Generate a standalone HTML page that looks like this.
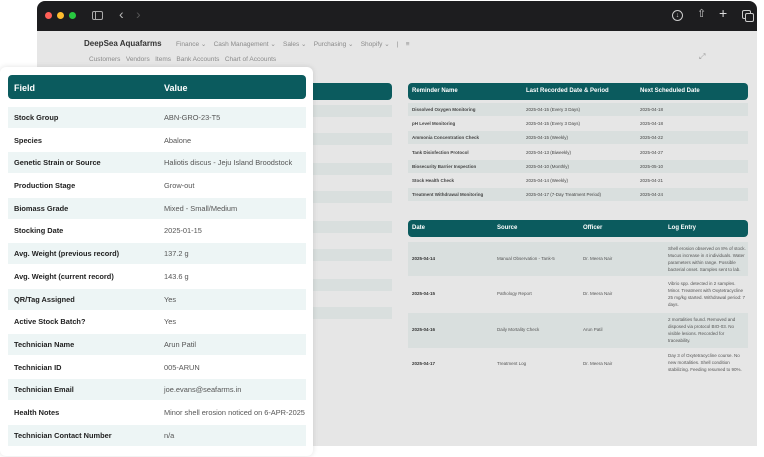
<!DOCTYPE html>
<html><head><meta charset="utf-8"><style>
*{margin:0;padding:0;box-sizing:border-box}
body{width:764px;height:457px;background:#fff;position:relative;overflow:hidden;font-family:"Liberation Sans",sans-serif}
.abs{position:absolute}
.win{left:37px;top:1px;width:720px;height:445px;background:#e6e6e6;border-radius:8px 8px 0 0;overflow:hidden}
.bar{left:0;top:0;width:720px;height:30px;background:#1d1d1f}
.dot{width:7px;height:7px;border-radius:50%;top:11px}
.nav{font-size:6.5px;color:#8a8a8a;white-space:nowrap}
.th{background:#0b5b5e;color:#fff;font-weight:bold;border-radius:4px}
.t1 div.r{position:absolute;left:0;width:340px;height:13px;font-size:4.5px;color:#444}
.t1 span{position:absolute;top:4px}
.card{left:0;top:67px;width:313px;height:389px;background:#fff;border-radius:6px;box-shadow:0 0 6px rgba(0,0,0,.12)}
.row{position:absolute;left:8px;width:298px;height:21px;font-size:7.4px;color:#222}
.row b{position:absolute;left:6px;top:6px;font-weight:bold}
.row span{position:absolute;left:156px;top:6px;color:#555}
.alt{background:#edf5f5}
.t2r{position:absolute;left:0;width:340px;font-size:4.5px;color:#555}
.t2r span{position:absolute}
</style></head><body>
<div class="abs win">
 <div class="abs bar">
  <div class="abs dot" style="left:8px;background:#ff5f57"></div>
  <div class="abs dot" style="left:20px;background:#febc2e"></div>
  <div class="abs dot" style="left:32px;background:#28c840"></div>
  <div class="abs" style="left:55px;top:10px;width:11px;height:9px;border:1px solid #aaa;border-radius:2px"></div>
  <div class="abs" style="left:58px;top:10px;width:1px;height:9px;background:#aaa"></div>
  <div class="abs" style="left:82px;top:5px;color:#bbb;font-size:14px">‹</div>
  <div class="abs" style="left:99px;top:5px;color:#555;font-size:14px">›</div>
  <div class="abs" style="left:635px;top:9px;width:11px;height:11px;border:1px solid #ccc;border-radius:50%;font-size:7px;color:#ccc;text-align:center;line-height:9px">↓</div>
  <div class="abs" style="left:660px;top:6px;color:#ccc;font-size:11px">⇧</div>
  <div class="abs" style="left:682px;top:4px;color:#ddd;font-size:14px">+</div>
  <div class="abs" style="left:705px;top:9px;width:9px;height:9px;border:1px solid #ccc;border-radius:2px"></div>
  <div class="abs" style="left:708px;top:12px;width:9px;height:9px;border:1px solid #ccc;border-radius:2px;background:#1d1d1f"></div>
 </div>
 <div class="abs" style="left:47px;top:38px;font-size:8px;font-weight:bold;color:#333">DeepSea Aquafarms</div>
 <div class="abs nav" style="left:139px;top:39px">Finance ⌄ &nbsp;&nbsp;&nbsp;Cash Management ⌄ &nbsp;&nbsp;&nbsp;Sales ⌄ &nbsp;&nbsp;&nbsp;Purchasing ⌄ &nbsp;&nbsp;&nbsp;Shopify ⌄ &nbsp;&nbsp;&nbsp;| &nbsp;&nbsp;&nbsp;≡</div>
 <div class="abs nav" style="left:52px;top:55px">Customers &nbsp;&nbsp;Vendors &nbsp;&nbsp;Items &nbsp;&nbsp;Bank Accounts &nbsp;&nbsp;Chart of Accounts</div>
 <div class="abs" style="left:662px;top:51px;color:#999;font-size:8px">⤢</div>
 <!-- background left table -->
 <div class="abs th" style="left:240px;top:82px;width:115px;height:17px"></div>
 <div class="abs" style="left:240px;top:104px;width:115px;height:12px;background:#d9dfde"></div>
 <div class="abs" style="left:240px;top:132px;width:115px;height:12px;background:#d9dfde"></div>
 <div class="abs" style="left:240px;top:162px;width:115px;height:12px;background:#d9dfde"></div>
 <div class="abs" style="left:240px;top:190px;width:115px;height:12px;background:#d9dfde"></div>
 <div class="abs" style="left:240px;top:220px;width:115px;height:12px;background:#d9dfde"></div>
 <div class="abs" style="left:240px;top:248px;width:115px;height:12px;background:#d9dfde"></div>
 <div class="abs" style="left:240px;top:278px;width:115px;height:12px;background:#d9dfde"></div>
 <div class="abs" style="left:240px;top:306px;width:115px;height:12px;background:#d9dfde"></div>
 <!-- reminders -->
 <div class="abs t1" style="left:371px;top:82px;width:340px;height:120px">
  <div class="abs th" style="left:0;top:0;width:340px;height:17px;font-size:6px"><span style="left:4px;top:5px">Reminder Name</span><span style="left:118px;top:5px">Last Recorded Date &amp; Period</span><span style="left:232px;top:5px">Next Scheduled Date</span></div>
  <div class="r" style="top:20px;background:#d9dfde"><span style="left:4px;font-weight:bold">Dissolved Oxygen Monitoring</span><span style="left:118px">2025-04-15 (Every 3 Days)</span><span style="left:232px">2025-04-18</span></div>
  <div class="r" style="top:34px"><span style="left:4px;font-weight:bold">pH Level Monitoring</span><span style="left:118px">2025-04-15 (Every 3 Days)</span><span style="left:232px">2025-04-18</span></div>
  <div class="r" style="top:48px;background:#d9dfde"><span style="left:4px;font-weight:bold">Ammonia Concentration Check</span><span style="left:118px">2025-04-15 (Weekly)</span><span style="left:232px">2025-04-22</span></div>
  <div class="r" style="top:63px"><span style="left:4px;font-weight:bold">Tank Disinfection Protocol</span><span style="left:118px">2025-04-13 (Biweekly)</span><span style="left:232px">2025-04-27</span></div>
  <div class="r" style="top:77px;background:#d9dfde"><span style="left:4px;font-weight:bold">Biosecurity Barrier Inspection</span><span style="left:118px">2025-04-10 (Monthly)</span><span style="left:232px">2025-05-10</span></div>
  <div class="r" style="top:91px"><span style="left:4px;font-weight:bold">Stock Health Check</span><span style="left:118px">2025-04-14 (Weekly)</span><span style="left:232px">2025-04-21</span></div>
  <div class="r" style="top:105px;background:#d9dfde"><span style="left:4px;font-weight:bold">Treatment Withdrawal Monitoring</span><span style="left:118px">2025-04-17 (7-Day Treatment Period)</span><span style="left:232px">2025-04-24</span></div>
 </div>
 <!-- log -->
 <div class="abs" style="left:371px;top:219px;width:340px;height:160px">
  <div class="abs th" style="left:0;top:0;width:340px;height:17px;font-size:6px"><span class="abs" style="left:4px;top:5px">Date</span><span class="abs" style="left:89px;top:5px">Source</span><span class="abs" style="left:175px;top:5px">Officer</span><span class="abs" style="left:260px;top:5px">Log Entry</span></div>
  <div class="t2r" style="top:22px;height:34px;background:#d9dfde"><span style="left:4px;top:14px;font-weight:bold;color:#333">2025-04-14</span><span style="left:89px;top:14px">Manual Observation - Tank-5</span><span style="left:175px;top:14px">Dr. Meera Nair</span><span style="left:260px;top:3px;width:78px;line-height:7px">Shell erosion observed on 8% of stock. Mucus increase in 4 individuals. Water parameters within range. Possible bacterial onset. Samples sent to lab.</span></div>
  <div class="t2r" style="top:57px;height:35px"><span style="left:4px;top:14px;font-weight:bold;color:#333">2025-04-15</span><span style="left:89px;top:14px">Pathology Report</span><span style="left:175px;top:14px">Dr. Meera Nair</span><span style="left:260px;top:3px;width:78px;line-height:7px">Vibrio spp. detected in 2 samples. Minor. Treatment with Oxytetracycline 25 mg/kg started. Withdrawal period: 7 days.</span></div>
  <div class="t2r" style="top:93px;height:35px;background:#d9dfde"><span style="left:4px;top:14px;font-weight:bold;color:#333">2025-04-16</span><span style="left:89px;top:14px">Daily Mortality Check</span><span style="left:175px;top:14px">Arun Patil</span><span style="left:260px;top:3px;width:78px;line-height:7px">2 mortalities found. Removed and disposed via protocol BIO-03. No visible lesions. Recorded for traceability.</span></div>
  <div class="t2r" style="top:129px;height:30px"><span style="left:4px;top:12px;font-weight:bold;color:#333">2025-04-17</span><span style="left:89px;top:12px">Treatment Log</span><span style="left:175px;top:12px">Dr. Meera Nair</span><span style="left:260px;top:3px;width:78px;line-height:7px">Day 3 of Oxytetracycline course. No new mortalities. Shell condition stabilizing. Feeding resumed to 90%.</span></div>
 </div>
</div>
<div class="abs card">
 <div class="abs th" style="left:8px;top:8px;width:298px;height:24px;font-size:9px"><span class="abs" style="left:6px;top:8px">Field</span><span class="abs" style="left:156px;top:8px">Value</span></div>
 <div class="row alt" style="top:40px"><b>Stock Group</b><span>ABN-GRO-23-T5</span></div>
 <div class="row" style="top:63px"><b>Species</b><span>Abalone</span></div>
 <div class="row alt" style="top:85px"><b>Genetic Strain or Source</b><span>Haliotis discus - Jeju Island Broodstock</span></div>
 <div class="row" style="top:108px"><b>Production Stage</b><span>Grow-out</span></div>
 <div class="row alt" style="top:131px"><b>Biomass Grade</b><span>Mixed - Small/Medium</span></div>
 <div class="row" style="top:153px"><b>Stocking Date</b><span>2025-01-15</span></div>
 <div class="row alt" style="top:176px"><b>Avg. Weight (previous record)</b><span>137.2 g</span></div>
 <div class="row" style="top:199px"><b>Avg. Weight (current record)</b><span>143.6 g</span></div>
 <div class="row alt" style="top:222px"><b>QR/Tag Assigned</b><span>Yes</span></div>
 <div class="row" style="top:244px"><b>Active Stock Batch?</b><span>Yes</span></div>
 <div class="row alt" style="top:267px"><b>Technician Name</b><span>Arun Patil</span></div>
 <div class="row" style="top:290px"><b>Technician ID</b><span>005-ARUN</span></div>
 <div class="row alt" style="top:312px"><b>Technician Email</b><span>joe.evans@seafarms.in</span></div>
 <div class="row" style="top:335px"><b>Health Notes</b><span>Minor shell erosion noticed on 6-APR-2025</span></div>
 <div class="row alt" style="top:358px"><b>Technician Contact Number</b><span>n/a</span></div>
</div>
</body></html>
